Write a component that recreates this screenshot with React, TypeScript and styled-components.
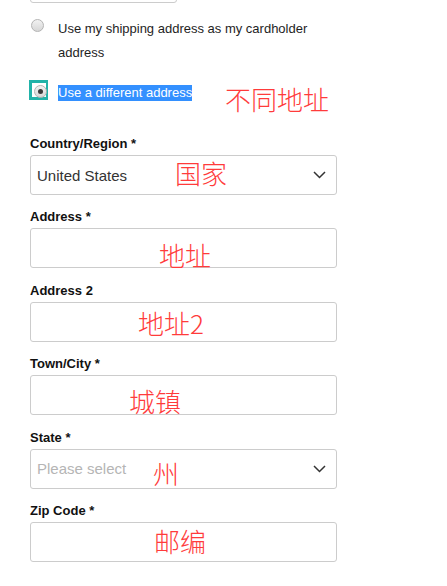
import React from "react"
import styled, { createGlobalStyle } from "styled-components"

const GlobalStyle = createGlobalStyle`
  html, body {
    margin: 0;
    padding: 0;
    background: #fff;
  }
  body {
    font-family: "Liberation Sans", Arial, sans-serif;
    color: #222;
  }
`

interface FieldConfig {
  label: string
  kind: "select" | "input"
  value?: string
  placeholder?: string
  note: string
  noteLeft: number
  noteTop: number
}

const fields: FieldConfig[] = [
  { label: "Country/Region *", kind: "select", value: "United States", note: "国家", noteLeft: 145, noteTop: 26 },
  { label: "Address *", kind: "input", note: "地址", noteLeft: 129, noteTop: 35 },
  { label: "Address 2", kind: "input", note: "地址2", noteLeft: 108, noteTop: 29 },
  { label: "Town/City *", kind: "input", note: "城镇", noteLeft: 99, noteTop: 34 },
  { label: "State *", kind: "select", placeholder: "Please select", note: "州", noteLeft: 123, noteTop: 32 },
  { label: "Zip Code *", kind: "input", note: "邮编", noteLeft: 124, noteTop: 27 },
]

const App: React.FC = () => {
  return (
    <>
      <GlobalStyle />
      <Page>
        <CutOffBox />

        <RadioRow $gap={14}>
          <RadioSlot>
            <Radio />
          </RadioSlot>
          <RadioText>Use my shipping address as my cardholder address</RadioText>
        </RadioRow>

        <RadioRow $gap={16}>
          <RadioSlot>
            <FocusRing>
              <Radio $checked />
            </FocusRing>
          </RadioSlot>
          <RadioText>
            <Selected>Use a different address</Selected>
          </RadioText>
          <Note style={{ left: 195, top: 5 }} $size={26}>不同地址</Note>
        </RadioRow>

        <Fields>
          {fields.map((f) => (
            <Field key={f.label}>
              <Label>{f.label}</Label>
              <Box>
                {f.kind === "select" && (
                  <>
                    <BoxText $muted={!f.value}>{f.value || f.placeholder}</BoxText>
                    <Chevron width="13" height="8" viewBox="0 0 13 8">
                      <path d="M1 1 L6.5 6.5 L12 1" fill="none" stroke="#333" strokeWidth="1.5" />
                    </Chevron>
                  </>
                )}
              </Box>
              <Note style={{ left: f.noteLeft, top: f.noteTop }} $size={26}>{f.note}</Note>
            </Field>
          ))}
        </Fields>
      </Page>
    </>
  )
}

const Page = styled.div`
  width: 307px;
  padding-left: 30px;
  overflow: visible;
`
const CutOffBox = styled.div`
  width: 147px;
  height: 22px;
  margin-top: -19px;
  box-sizing: border-box;
  border: 1px solid #ccc;
  border-radius: 3px;
`
const RadioRow = styled.div<{ $gap: number }>`
  position: relative;
  display: flex;
  align-items: flex-start;
  margin-top: ${(p) => p.$gap}px;
`
const RadioSlot = styled.div`
  width: 28px;
  flex: none;
  height: 24px;
  position: relative;
`
const Radio = styled.span<{ $checked?: boolean }>`
  position: absolute;
  left: 1px;
  top: 2px;
  width: 13px;
  height: 13px;
  box-sizing: border-box;
  border-radius: 50%;
  border: 1px solid #b4b4b4;
  background: linear-gradient(#f2f2f2, #d6d6d6);
  ${(p) =>
    p.$checked &&
    `
    left: 2px;
    top: 2px;
    &::after {
      content: "";
      position: absolute;
      left: 3px;
      top: 3px;
      width: 5px;
      height: 5px;
      border-radius: 50%;
      background: #3a3a3a;
    }
  `}
`
const FocusRing = styled.span`
  position: absolute;
  left: -1px;
  top: -1px;
  width: 19px;
  height: 20px;
  box-sizing: border-box;
  border: 2px solid #22b3a9;
  border-width: 3px 2px 3px 3px;
`
const RadioText = styled.div`
  font-size: 13px;
  line-height: 24px;
  color: #1e1e1e;
`
const Selected = styled.span`
  background: #3390ff;
  color: #fff;
  padding-bottom: 1px;
`
const Note = styled.span<{ $size: number }>`
  position: absolute;
  font-family: "Noto Sans CJK SC", sans-serif;
  font-size: ${(p) => p.$size}px;
  line-height: 1;
  color: #ff3b3b;
  white-space: nowrap;
  font-weight: 300;
  pointer-events: none;
`
const Fields = styled.div`
  margin-top: 29px;
`
const Field = styled.div`
  position: relative;
  margin-bottom: 12.4px;
`
const Label = styled.div`
  font-size: 13px;
  line-height: 16px;
  font-weight: bold;
  color: #111;
  padding-top: 2px;
  margin-bottom: 3px;
`
const Box = styled.div`
  height: 40px;
  box-sizing: border-box;
  border: 1px solid #ccc;
  border-radius: 3px;
  display: flex;
  align-items: center;
  justify-content: space-between;
  padding: 0 10px 0 6px;
`
const BoxText = styled.span<{ $muted: boolean }>`
  font-size: 15px;
  color: ${(p) => (p.$muted ? "#b5b5b5" : "#333")};
`
const Chevron = styled.svg`
  flex: none;
`

export default App
